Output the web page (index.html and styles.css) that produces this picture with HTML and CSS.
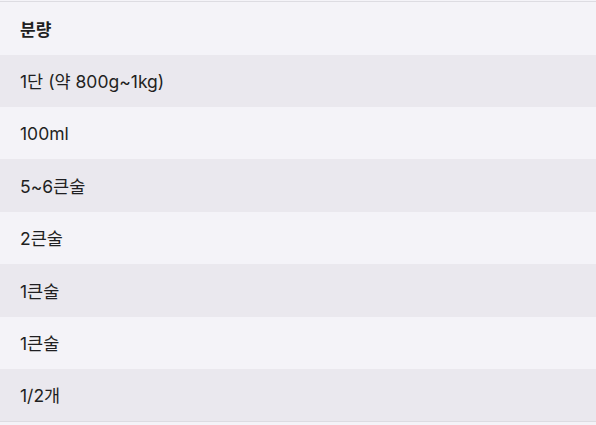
FILE: index.html
```html
<!DOCTYPE html>
<html lang="ko">
<head>
<meta charset="utf-8">
<link rel="stylesheet" href="styles.css">
</head>
<body>
<table class="qty-table">
  <thead>
    <tr><th>분량</th></tr>
  </thead>
  <tbody>
    <tr class="odd"><td>1단 (약 800g~1kg)</td></tr>
    <tr><td>100ml</td></tr>
    <tr class="odd"><td>5~6큰술</td></tr>
    <tr><td>2큰술</td></tr>
    <tr class="odd"><td>1큰술</td></tr>
    <tr><td>1큰술</td></tr>
    <tr class="odd"><td>1/2개</td></tr>
  </tbody>
</table>
</body>
</html>
```
FILE: styles.css
```css
html, body {
  margin: 0;
  padding: 0;
  background: #f4f3f8;
}
body {
  padding-top: 1px;
  font-family: Inter, "Noto Sans CJK KR", sans-serif;
  color: #1f1f22;
}
.qty-table {
  width: 100%;
  border-collapse: collapse;
  border-top: 1px solid #dddce2;
  border-bottom: 1px solid #dddce2;
}
.qty-table th {
  text-align: left;
  font-weight: 700;
  font-size: 17px;
  height: 53px;
  padding: 0 20px;
  box-sizing: border-box;
  background: #f4f3f8;
}
.qty-table td {
  font-size: 17.5px;
  height: 52.43px;
  padding: 0 20px;
  box-sizing: border-box;
  background: #f4f3f8;
}
.qty-table tr.odd td {
  background: #eae8ee;
}
```
